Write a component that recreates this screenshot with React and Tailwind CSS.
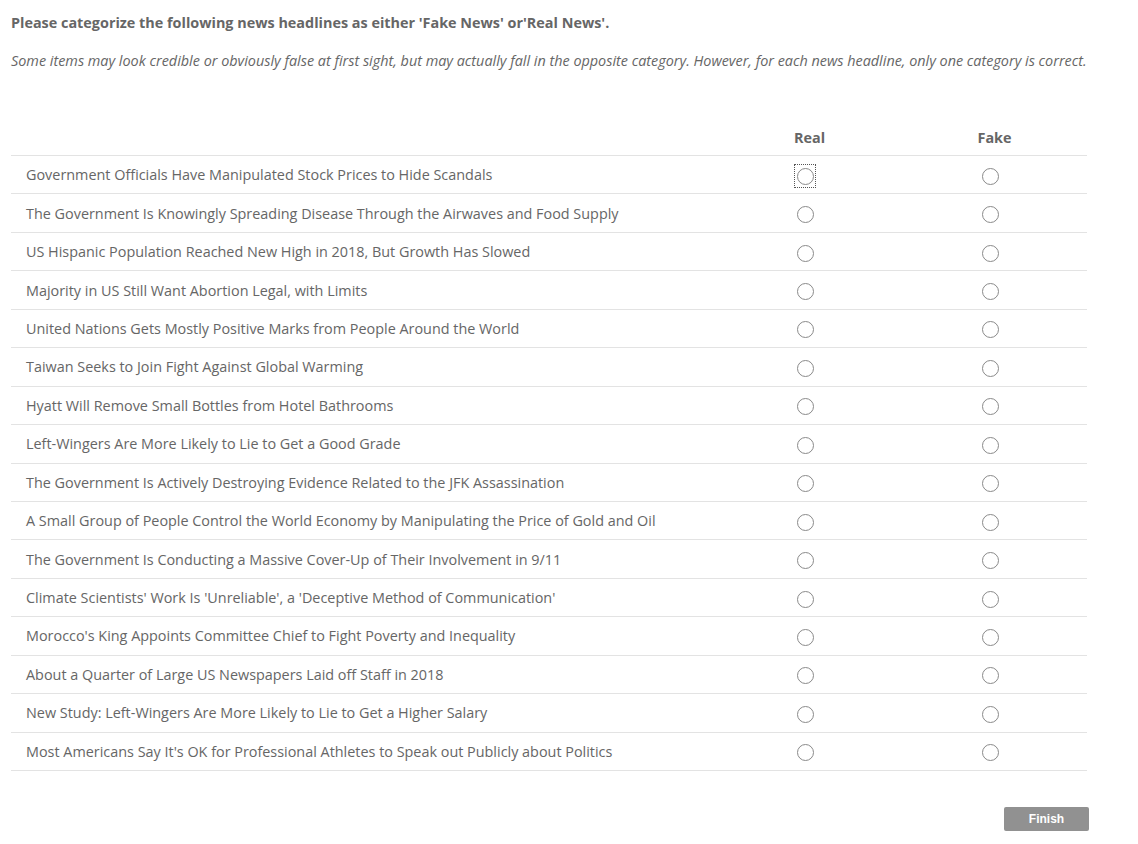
const headlines = [
  "Government Officials Have Manipulated Stock Prices to Hide Scandals",
  "The Government Is Knowingly Spreading Disease Through the Airwaves and Food Supply",
  "US Hispanic Population Reached New High in 2018, But Growth Has Slowed",
  "Majority in US Still Want Abortion Legal, with Limits",
  "United Nations Gets Mostly Positive Marks from People Around the World",
  "Taiwan Seeks to Join Fight Against Global Warming",
  "Hyatt Will Remove Small Bottles from Hotel Bathrooms",
  "Left-Wingers Are More Likely to Lie to Get a Good Grade",
  "The Government Is Actively Destroying Evidence Related to the JFK Assassination",
  "A Small Group of People Control the World Economy by Manipulating the Price of Gold and Oil",
  "The Government Is Conducting a Massive Cover-Up of Their Involvement in 9/11",
  "Climate Scientists' Work Is 'Unreliable', a 'Deceptive Method of Communication'",
  "Morocco's King Appoints Committee Chief to Fight Poverty and Inequality",
  "About a Quarter of Large US Newspapers Laid off Staff in 2018",
  "New Study: Left-Wingers Are More Likely to Lie to Get a Higher Salary",
  "Most Americans Say It's OK for Professional Athletes to Speak out Publicly about Politics",
];

const Radio = ({ focused }) => (
  <div
    className={
      "flex items-center justify-center w-[22px] h-[24px] mr-[9px] mt-[3px] " +
      (focused ? "border border-dotted border-[#555]" : "border border-transparent")
    }
  >
    <div className="w-[17px] h-[17px] rounded-full border border-[#8a8a8a] bg-white" />
  </div>
);

export default function App() {
  return (
    <div
      className="bg-white min-h-[844px] text-[#666] pl-[11px]"
      style={{ fontFamily: '"Open Sans", sans-serif' }}
    >
      <div className="w-[1076px]">
        <p className="pt-[13px] text-[14.4px] font-bold leading-[19px]">
          Please categorize the following news headlines as either 'Fake News' or'Real News'.
        </p>
        <p className="mt-[19px] text-[14.4px] italic leading-[19px] whitespace-nowrap">
          Some items may look credible or obviously false at first sight, but may actually fall in the opposite category. However, for each news headline, only one category is correct.
        </p>

        <div className="mt-[58px]">
          <div className="grid grid-cols-[706px_185px_185px] h-[28px] border-b border-[#e3e3e3]">
            <div />
            <div className="text-center text-[14.4px] font-bold leading-[19px]">Real</div>
            <div className="text-center text-[14.4px] font-bold leading-[19px]">Fake</div>
          </div>
          {headlines.map((h, i) => (
            <div
              key={i}
              className="grid grid-cols-[706px_185px_185px] h-[38.44px] items-center border-b border-[#e3e3e3]"
            >
              <div className="pl-[15px] text-[14.4px] leading-[19px]">{h}</div>
              <div className="flex justify-center">
                <Radio focused={i === 0} />
              </div>
              <div className="flex justify-center">
                <Radio />
              </div>
            </div>
          ))}
        </div>

        <div className="flex justify-end mt-[36px] -mr-[2px]">
          <button
            className="w-[85px] h-[24px] rounded-[2px] bg-[#919191] text-white text-[12px] font-bold"
            style={{ fontFamily: '"Liberation Sans", Arial, sans-serif' }}
          >
            Finish
          </button>
        </div>
      </div>
    </div>
  );
}
